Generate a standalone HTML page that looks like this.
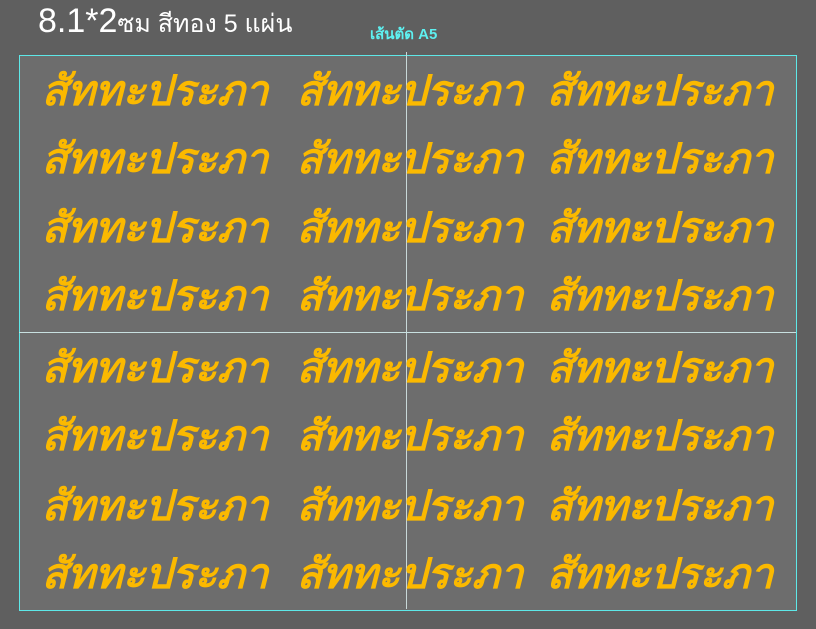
<!DOCTYPE html>
<html><head><meta charset="utf-8"><style>
html,body{margin:0;padding:0}
body{width:816px;height:629px;background:#5f5f5f;position:relative;overflow:hidden;font-family:"Liberation Sans",sans-serif}
.t{position:absolute;left:38px;top:2px;color:#fff;font-size:34px;white-space:nowrap}
.t small{font-size:25px}
.a5{position:absolute;left:370px;top:22px;color:#5ef0f0;font-size:15px;font-weight:bold}
.box{position:absolute;left:19px;top:55px;width:776px;height:554px;background:#6d6d6d;border:1px solid #5ee8e8}
.v{position:absolute;left:406px;top:52px;width:1px;height:557px;background:#c8d8d8}
.h{position:absolute;left:19px;top:332px;width:777px;height:1px;background:#c8e0e0}
.w{position:absolute;color:#fbb900;font-size:42px;font-style:italic;font-weight:bold;white-space:nowrap;line-height:1;width:230px;text-align:center}
</style></head><body>
<div class="t">8.1*2<small>ซม สีทอง 5 แผ่น</small></div>
<div class="a5">เส้นตัด A5</div>
<div class="box"></div>
<div class="v"></div><div class="h"></div>
<div id="g"></div>
<script>
var g=document.getElementById('g'),xs=[40,295,545],ys=[70,138,207,275,347,415,485,553],h='';
ys.forEach(function(y){xs.forEach(function(x){h+='<div class="w" style="left:'+x+'px;top:'+y+'px">สัททะประภา</div>';});});
g.innerHTML=h;
</script>
</body></html>
